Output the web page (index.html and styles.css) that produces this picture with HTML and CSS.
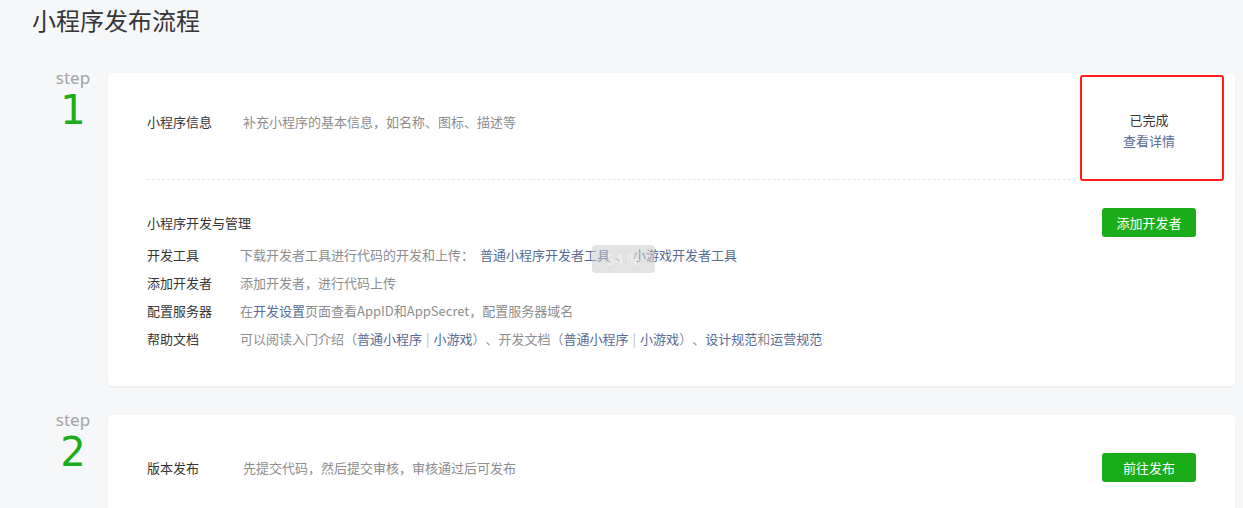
FILE: index.html
```html
<!DOCTYPE html>
<html lang="zh-CN">
<head>
<meta charset="utf-8">
<title>小程序发布流程</title>
<link rel="stylesheet" href="styles.css">
</head>
<body>
<div class="page">
  <h1 class="title">小程序发布流程</h1>

  <div class="step">
    <div class="step-side">
      <div class="step-label">step</div>
      <div class="step-num">1</div>
    </div>
    <div class="card">
      <div class="sec sec-info">
        <div class="info-row">
          <span class="lbl lbl-wide">小程序信息</span>
          <span class="desc">补充小程序的基本信息，如名称、图标、描述等</span>
        </div>
        <div class="status">
          <div class="status-done">已完成</div>
          <a class="link">查看详情</a>
        </div>
        <div class="highlight"></div>
      </div>
      <div class="sec sec-dev">
        <div class="dev-head">
          <span class="lbl">小程序开发与管理</span>
          <a class="btn">添加开发者</a>
        </div>
        <div class="dev-row">
          <span class="lbl lbl-col">开发工具</span>
          <span class="desc">下载开发者工具进行代码的开发和上传：<a class="link link-first">普通小程序开发者工具</a><span class="dun">、</span><a class="link">小游戏开发者工具</a><span class="hud">54 %</span></span>
        </div>
        <div class="dev-row">
          <span class="lbl lbl-col">添加开发者</span>
          <span class="desc">添加开发者，进行代码上传</span>
        </div>
        <div class="dev-row">
          <span class="lbl lbl-col">配置服务器</span>
          <span class="desc">在<a class="link">开发设置</a>页面查看AppID和AppSecret，配置服务器域名</span>
        </div>
        <div class="dev-row">
          <span class="lbl lbl-col">帮助文档</span>
          <span class="desc">可以阅读入门介绍（<a class="link">普通小程序</a><span class="sep">|</span><a class="link">小游戏</a>）、开发文档（<a class="link">普通小程序</a><span class="sep">|</span><a class="link">小游戏</a>）、<a class="link">设计规范</a>和<a class="link">运营规范</a></span>
        </div>
      </div>
    </div>
  </div>

  <div class="step step-2">
    <div class="step-side">
      <div class="step-label">step</div>
      <div class="step-num">2</div>
    </div>
    <div class="card">
      <div class="sec sec-pub">
        <div class="info-row">
          <span class="lbl lbl-wide">版本发布</span>
          <span class="desc">先提交代码，然后提交审核，审核通过后可发布</span>
        </div>
        <a class="btn">前往发布</a>
      </div>
    </div>
  </div>
</div>
</body>
</html>
```

FILE: styles.css
```css
* { box-sizing: border-box; }
html, body {
  margin: 0;
  padding: 0;
  background: #f6f7f9;
  font-family: "Noto Sans CJK SC", "Noto Sans", sans-serif;
  color: #353535;
  font-size: 13px;
  overflow: hidden;
  text-spacing-trim: space-all;
}
.page {
  padding: 0 8px 0 0;
}
.title {
  margin: 0;
  padding-left: 32px;
  font-size: 24px;
  font-weight: normal;
  line-height: 40px;
  color: #353535;
}
.step {
  display: flex;
  margin-top: 33px;
}
.step-2 {
  margin-top: 29px;
}
.step-side {
  width: 108px;
  padding-left: 38px;
  display: flex;
  flex-direction: column;
  align-items: center;
}
.step-label {
  font-family: "Noto Sans", sans-serif;
  font-size: 17px;
  line-height: 14px;
  color: #a3a3a3;
  margin-top: -2px;
}
.step-num {
  font-family: "DejaVu Sans", sans-serif;
  font-size: 40px;
  line-height: 40px;
  color: #1aad19;
  margin-top: 5px;
}
.card {
  flex: 1;
  background: #fff;
  border-radius: 4px;
  box-shadow: 0 1px 2px rgba(0, 0, 0, 0.05);
  padding: 0 39px;
}
.sec {
  display: flex;
  align-items: flex-start;
  justify-content: space-between;
}
.sec-info {
  position: relative;
  height: 107px;
  border-bottom: 1px dashed #e4e6ea;
}
.info-row {
  padding-top: 39px;
  line-height: 20px;
  display: flex;
}
.lbl {
  color: #353535;
  white-space: nowrap;
}
.lbl-wide {
  width: 96px;
}
.lbl-col {
  width: 93px;
  flex: none;
}
.desc {
  color: #8d8d8d;
  white-space: nowrap;
  position: relative;
}
.link {
  color: #576b95;
  text-decoration: none;
}
.link-first {
  margin-left: 6px;
}
.dun {
  padding: 0 5px;
}
.sep {
  color: #b5b5b5;
  padding: 0 4px;
}
.status {
  width: 94px;
  padding-top: 36px;
  text-align: center;
  line-height: 21px;
}
.status-done {
  color: #353535;
}
.highlight {
  position: absolute;
  right: -28px;
  top: 2px;
  width: 144px;
  height: 106px;
  border: 2.5px solid #ff1a1a;
  border-radius: 3px;
}
.sec-dev {
  flex-direction: column;
  align-items: stretch;
  padding: 28px 0 33px;
}
.dev-head {
  display: flex;
  align-items: center;
  justify-content: space-between;
  margin-bottom: 4px;
}
.btn {
  display: inline-block;
  width: 94px;
  height: 29px;
  line-height: 29px;
  text-align: center;
  color: #fff;
  background: #1aad19;
  border-radius: 3px;
  font-size: 13px;
}
.dev-row {
  display: flex;
  line-height: 28px;
}
.hud {
  position: absolute;
  left: 352px;
  top: 4px;
  width: 63px;
  height: 28px;
  line-height: 28px;
  border-radius: 4px;
  background: rgba(200, 200, 200, 0.5);
  color: rgba(255, 255, 255, 0.5);
  text-align: center;
  font-size: 15px;
}
.sec-pub {
  padding-top: 38px;
  height: 100px;
}
.sec-pub .info-row {
  padding-top: 5px;
}
```
